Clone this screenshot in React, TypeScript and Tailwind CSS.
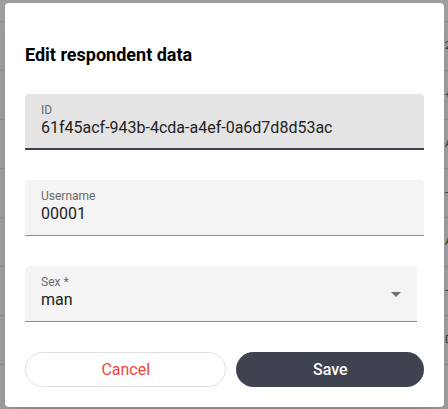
import React from 'react';

const rows = ['2', '+', 'A', '-', 'A', '-', 'D', ''];

function Field({ label, value, disabled, select, className }: any) {
    return (
        <div className={`relative h-[56px] rounded-t-[4px] px-4 ${disabled ? 'bg-[#e4e4e4] border-b-2 border-[#3f4350]' : 'bg-[#f4f4f4] border-b border-[#8c8c8c]'} ${className ?? ''}`}>
            <div className="mt-[10px] text-[12px] leading-[12px] text-[#6b6b6b]">{label}</div>
            <div className="mt-[4px] text-[16px] leading-[16px] text-[#232323]">{value}</div>
            {select && (
                <svg className="absolute right-[16px] top-[26px]" width="10" height="5" viewBox="0 0 10 5">
                    <path d="M0 0 L10 0 L5 5 Z" fill="#6f6f6f" />
                </svg>
            )}
        </div>
    );
}

export default function App() {
    return (
        <div className="relative w-[448px] h-[409px] overflow-hidden bg-[#9f9f9f] font-['Roboto',sans-serif]">
            {/* table behind the overlay */}
            <div className="flex flex-col">
                <div className="h-[22px] border-b border-[#8e8e8e]"></div>
                {rows.map((r, i) => (
                    <div key={i} className="h-[49px] border-b border-[#8e8e8e] flex items-center">
                        <span className="ml-[445px] text-[11px] text-[#3a3520]">{r}</span>
                    </div>
                ))}
            </div>

            <div className="absolute left-[5px] top-[3px] w-[439px] h-[404px] bg-white rounded-[4px] shadow-xl px-5 pt-[40px]">
                <h2 className="text-[18px] leading-[24px] font-bold text-black">Edit respondent data</h2>

                <div className="mt-[27px] flex flex-col gap-[30px]">
                    <Field label="ID" value="61f45acf-943b-4cda-a4ef-0a6d7d8d53ac" disabled />
                    <Field label="Username" value="00001" />
                    <Field label="Sex *" value="man" select className="w-[392px]" />
                </div>

                <div className="mt-[30px] flex gap-[10px]">
                    <button className="w-[202px] h-[35px] rounded-full border border-[#e0e0e0] bg-white text-[16px] text-[#f44336]">
                        Cancel
                    </button>
                    <button className="w-[188px] h-[35px] rounded-full bg-[#3f4350] text-[16px] font-medium text-white">
                        Save
                    </button>
                </div>
            </div>
        </div>
    );
}
